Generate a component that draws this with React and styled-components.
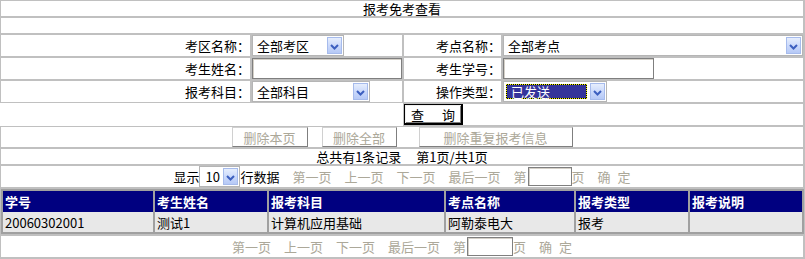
import React from 'react';
import styled, { createGlobalStyle, css } from 'styled-components';

const GRID = '#c0c0c0';
const MUTED = '#aca899';
const FORM_COLS = '251px 152px 99px 302px';

const GlobalStyle = createGlobalStyle`
	* {
		box-sizing: border-box;
	}
	body {
		margin: 0;
		background: #fff;
		color: #000;
		font-family: "Noto Sans CJK SC", "Noto Sans", sans-serif;
		font-size: 13px;
	}
`;

const Frame = styled.div`
	width: 805px;
	border-right: 1px solid ${GRID};
	border-bottom: 1px solid ${GRID};
`;

const Row = styled.div`
	display: grid;
	grid-template-columns: ${(p) => p.$cols || '1fr'};
	height: ${(p) => p.$h + 2}px;
`;

const Cell = styled.div`
	grid-column: ${(p) => (p.$span ? `span ${p.$span}` : 'auto')};
	display: flex;
	align-items: ${(p) => (p.$top ? 'flex-start' : 'center')};
	justify-content: ${(p) =>
		p.$align === 'right' ? 'flex-end' : p.$align === 'left' ? 'flex-start' : 'center'};
	gap: ${(p) => p.$gap || 0}px;
	border: 1px solid ${(p) => (p.$blank ? 'transparent' : GRID)};
	line-height: 15px;
	white-space: nowrap;
`;

const SelectBox = styled.div`
	flex: none;
	display: flex;
	align-items: center;
	width: ${(p) => p.$w}px;
	height: 21px;
	padding: 1px;
	border: 1px solid #b5b5b5;
	background: #fff;
`;

const SelectValue = styled.span`
	flex: 1;
	align-self: stretch;
	display: flex;
	align-items: center;
	padding-left: ${(p) => p.$pad ?? 3}px;

	${(p) =>
		p.$focused &&
		css`
			margin: 1px 3px 1px 1px;
			padding-left: 4px;
			color: #fff;
			border: 1px dotted #f4f400;
			background: linear-gradient(#34349a, #34349a) padding-box, linear-gradient(#000, #000) border-box;
		`}
`;

const DropButton = styled.span`
	flex: none;
	display: flex;
	align-items: center;
	justify-content: center;
	width: 15px;
	height: 17px;
	padding-top: 2px;
	border: 1px solid #a6bbec;
	background: linear-gradient(#e6eefd, #c9d8fb 55%, #b6c9f6);
`;

const Select = ({ width, value, focused, pad }) => (
	<SelectBox $w={width}>
		<SelectValue $focused={focused} $pad={pad}>
			{value}
		</SelectValue>
		<DropButton>
			<svg width='9' height='6' viewBox='0 0 9 6'>
				<path d='M1 1 L4.5 4.5 L8 1' fill='none' stroke='#3c5fbf' strokeWidth='2' />
			</svg>
		</DropButton>
	</SelectBox>
);

const TextInput = styled.input`
	flex: none;
	width: ${(p) => p.$w}px;
	height: ${(p) => p.$h || 21}px;
	margin: 0 0 0 ${(p) => p.$gap || 0}px;
	padding: 0;
	border: 1px solid #7f7f7f;
	box-shadow: inset 1px 1px 0 #d4d0c8;
	background: #fff;
	font: inherit;
	outline: none;
`;

const QueryButton = styled.button`
	width: 59px;
	height: 21px;
	padding: 0;
	border: 1px solid #000;
	border-right-width: 2px;
	border-bottom-width: 2px;
	box-shadow: inset 1px 1px 0 #f0f0f0, inset -1px -1px 0 #808080;
	background: #fff;
	color: #000;
	font: inherit;
	word-spacing: 15px;
`;

const GhostButton = styled.button`
	flex: none;
	width: ${(p) => p.$w}px;
	height: 20px;
	margin-left: ${(p) => p.$gap || 0}px;
	padding: 0;
	border: 1px solid;
	border-color: #d0d0d0 #7f7f7f #7f7f7f #d0d0d0;
	background: #fff;
	color: ${MUTED};
	font: inherit;
`;

const Plain = styled.span`
	margin-left: ${(p) => p.$gap || 0}px;
`;

const PagerLink = styled.span`
	color: ${MUTED};
	margin-left: ${(p) => p.$gap ?? 13}px;
	word-spacing: 4px;
`;

const DataTable = styled.table`
	flex: none;
	width: 803px;
	table-layout: fixed;
	border: 1px solid #a0a0a0;
	border-spacing: 0;
	font-size: 13px;
`;

const Th = styled.th`
	width: ${(p) => p.$w}px;
	padding: 3px 0 3px 2px;
	border: 1px solid #a0a0a0;
	border-bottom: 0;
	background: #000080;
	color: #fff;
	font-weight: bold;
	text-align: left;
	line-height: 15px;
	white-space: nowrap;
`;

const Td = styled.td`
	padding: 3px 0 2px 2px;
	border: 1px solid #a0a0a0;
	border-top: 0;
	background: #e8e8e8;
	line-height: 15px;
	white-space: nowrap;
`;

const columns = [
	['学号', 152],
	['考生姓名', 114],
	['报考科目', 177],
	['考点名称', 130],
	['报考类型', 114],
	['报考说明', 114],
];

const records = [['20060302001', '测试1', '计算机应用基础', '阿勒泰电大', '报考', '']];

const Pager = ({ withSize, inputWidth }) => (
	<>
		{withSize && (
			<>
				<Plain>显示</Plain>
				<Select width={41} value='10' pad={4} />
				<Plain>行数据</Plain>
			</>
		)}
		<PagerLink $gap={withSize ? 13 : 0}>第一页</PagerLink>
		<PagerLink>上一页</PagerLink>
		<PagerLink>下一页</PagerLink>
		<PagerLink>最后一页</PagerLink>
		<PagerLink>第</PagerLink>
		<TextInput $w={inputWidth} $h={19} $gap={1} />
		<PagerLink $gap={0}>页</PagerLink>
		<PagerLink>确 定</PagerLink>
	</>
);

const App = () => (
	<Frame>
		<GlobalStyle />
		<Row $h={15}>
			<Cell>报考免考查看</Cell>
		</Row>
		<Row $h={15}>
			<Cell>&nbsp;</Cell>
		</Row>

		<Row $cols={FORM_COLS} $h={21}>
			<Cell $align='right'>考区名称：</Cell>
			<Cell $align='left'>
				<Select width={92} value='全部考区' />
			</Cell>
			<Cell $align='right'>考点名称：</Cell>
			<Cell $align='left'>
				<Select width={300} value='全部考点' />
			</Cell>
		</Row>
		<Row $cols={FORM_COLS} $h={21}>
			<Cell $align='right'>考生姓名：</Cell>
			<Cell $align='left'>
				<TextInput $w={150} />
			</Cell>
			<Cell $align='right'>考生学号：</Cell>
			<Cell $align='left'>
				<TextInput $w={151} />
			</Cell>
		</Row>
		<Row $cols={FORM_COLS} $h={21}>
			<Cell $align='right'>报考科目：</Cell>
			<Cell $align='left'>
				<Select width={118} value='全部科目' />
			</Cell>
			<Cell $align='right'>操作类型：</Cell>
			<Cell $align='left'>
				<Select width={104} value='已发送' focused />
			</Cell>
		</Row>
		<Row $cols={FORM_COLS} $h={21}>
			<Cell $span={2} $blank />
			<Cell $span={2} $align='left' $top>
				<QueryButton>查 询</QueryButton>
			</Cell>
		</Row>

		<Row $h={20}>
			<Cell $top>
				<GhostButton $w={76}>删除本页</GhostButton>
				<GhostButton $w={75} $gap={14}>
					删除全部
				</GhostButton>
				<GhostButton $w={154} $gap={22}>
					删除重复报考信息
				</GhostButton>
			</Cell>
		</Row>
		<Row $h={15}>
			<Cell $gap={15}>
				<span>总共有1条记录</span>
				<span>第1页/共1页</span>
			</Cell>
		</Row>
		<Row $h={21}>
			<Cell>
				<Pager withSize inputWidth={44} />
			</Cell>
		</Row>

		<Row $h={45}>
			<Cell $align='left' $top>
				<DataTable>
					<thead>
						<tr>
							{columns.map(([title, width]) => (
								<Th key={title} $w={width}>
									{title}
								</Th>
							))}
						</tr>
					</thead>
					<tbody>
						{records.map((record) => (
							<tr key={record[0]}>
								{record.map((value, i) => (
									<Td key={i}>{value}</Td>
								))}
							</tr>
						))}
					</tbody>
				</DataTable>
			</Cell>
		</Row>
		<Row $h={21}>
			<Cell>
				<Pager inputWidth={46} />
			</Cell>
		</Row>
	</Frame>
);

export default App;
